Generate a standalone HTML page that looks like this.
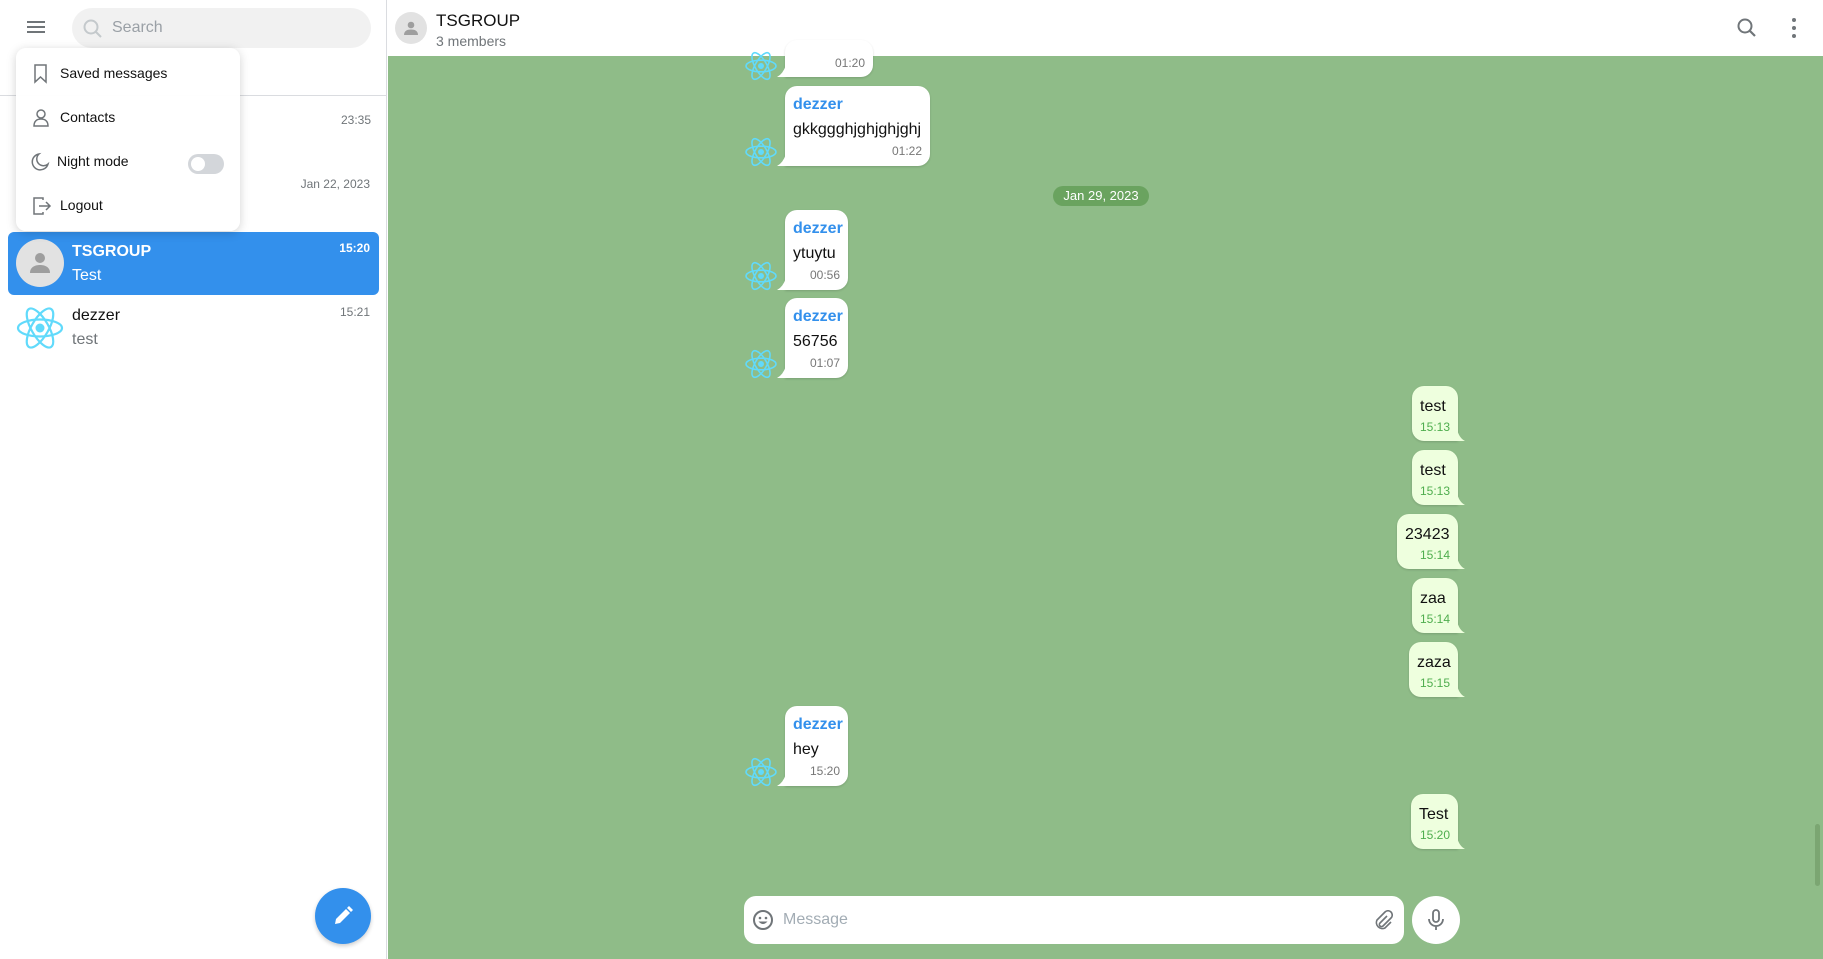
<!DOCTYPE html>
<html><head><meta charset="utf-8"><style>
*{box-sizing:border-box;margin:0;padding:0}
body{width:1823px;height:959px;overflow:hidden;font-family:"Liberation Sans",Arial,sans-serif;background:#fff;position:relative}
.abs{position:absolute}
#side{left:0;top:0;width:387px;height:959px;background:#fff;border-right:1px solid #dadce0}
#chat{left:388px;top:56px;width:1435px;height:903px;background:#8fbc88}
#hdr{left:388px;top:0;width:1435px;height:56px;background:#fff}
.bl{background:#fff;border-radius:12px 12px 12px 0;box-shadow:0 1px 2px rgba(0,0,0,.15)}
.br{background:#eeffde;border-radius:12px 12px 0 12px;box-shadow:0 1px 2px rgba(0,0,0,.15)}
.bl::before{content:"";position:absolute;left:-8px;bottom:0;width:9px;height:12px;background:#fff;clip-path:path("M9 0V12H0Q6 9 9 0z")}
.br::after{content:"";position:absolute;right:-7px;bottom:0;width:8px;height:12px;background:#eeffde;clip-path:path("M0 0V12H8Q2 9 0 0z")}
.nm{color:#3390ec;font-size:16px;font-weight:bold;position:absolute;left:8px;top:10px}
.tx{font-size:16px;color:#111;position:absolute}
.tm{font-size:12px;color:#777;position:absolute;right:8px}
.gt{color:#4fae4e}
.mi{position:absolute;left:0;width:224px;height:44px;font-size:14px;color:#111}
.mi svg{position:absolute;left:16px;top:10px}
.mi span{position:absolute;left:44px;top:11px}
</style></head><body>
<div id="side" class="abs">
  <svg class="abs" style="left:26px;top:20px" width="20" height="14"><path d="M1 2h18M1 7h18M1 12h18" stroke="#707579" stroke-width="2"/></svg>
  <div class="abs" style="left:72px;top:8px;width:299px;height:40px;border-radius:20px;background:#f1f1f1"></div>
  <svg class="abs" style="left:82px;top:18px" width="22" height="22"><circle cx="9" cy="9" r="6.5" stroke="#c4c9cc" stroke-width="2" fill="none"/><path d="M14 14l5 5" stroke="#c4c9cc" stroke-width="2"/></svg>
  <div class="abs" style="left:112px;top:19px;font-size:16px;color:#9aa0a6">Search</div>
  <div class="abs" style="left:0;top:95px;width:387px;height:1px;background:#dadce0"></div>
  <div class="abs" style="left:341px;top:113px;font-size:12px;color:#707579;width:29px;text-align:right">23:35</div>
  <div class="abs" style="left:290px;top:177px;font-size:12px;color:#707579;width:80px;text-align:right">Jan 22, 2023</div>
  <div class="abs" style="left:8px;top:232px;width:371px;height:63px;background:#3390ec;border-radius:6px"></div>
  <div class="abs" style="left:16px;top:239px;width:48px;height:48px;border-radius:50%;background:#e2e2e2"></div>
  <svg class="abs" style="left:28px;top:251px" width="24" height="24"><circle cx="12" cy="7" r="5" fill="#9e9e9e"/><path d="M2 22c0-6 5-8 10-8s10 2 10 8z" fill="#9e9e9e"/></svg>
  <div class="abs" style="left:72px;top:243px;font-size:16px;font-weight:bold;color:#fff">TSGROUP</div>
  <div class="abs" style="left:72px;top:267px;font-size:16px;color:#fff">Test</div>
  <div class="abs" style="left:330px;top:241px;font-size:12px;font-weight:bold;color:#fff;width:40px;text-align:right">15:20</div>
  <svg class="abs" style="left:16px;top:304px" width="48" height="48" viewBox="-24 -24 48 48"><g fill="none" stroke="#61dafb" stroke-width="2.2"><ellipse rx="22" ry="8.5"/><ellipse rx="22" ry="8.5" transform="rotate(60)"/><ellipse rx="22" ry="8.5" transform="rotate(120)"/></g><circle r="4.5" fill="#61dafb"/></svg>
  <div class="abs" style="left:72px;top:307px;font-size:16px;color:#111">dezzer</div>
  <div class="abs" style="left:72px;top:331px;font-size:16px;color:#707579">test</div>
  <div class="abs" style="left:330px;top:305px;font-size:12px;color:#707579;width:40px;text-align:right">15:21</div>
  <div class="abs" style="left:16px;top:48px;width:224px;height:183px;background:rgba(255,255,255,.96);border-radius:10px;box-shadow:0 2px 10px rgba(0,0,0,.18)">
    <div class="mi" style="top:6px"><svg width="18" height="20"><path d="M3 1h11v17l-5.5-5-5.5 5z" fill="none" stroke="#707579" stroke-width="1.5"/></svg><span>Saved messages</span></div>
    <div class="mi" style="top:50px"><svg width="20" height="20"><circle cx="9" cy="6" r="4" fill="none" stroke="#707579" stroke-width="1.5"/><path d="M2 18c0-5 3-7 7-7s7 2 7 7z" fill="none" stroke="#707579" stroke-width="1.5"/></svg><span>Contacts</span></div>
    <div class="mi" style="top:94px"><svg width="20" height="20" style="left:14px"><path d="M9 2a8 8 0 1 0 9 10 6 6 0 0 1-9-10z" fill="none" stroke="#707579" stroke-width="1.5"/></svg><span style="left:41px">Night mode</span>
      <div style="position:absolute;left:172px;top:12px;width:36px;height:20px;border-radius:10px;background:#d3d6da"><div style="position:absolute;left:3px;top:3px;width:14px;height:14px;border-radius:50%;background:#fff"></div></div></div>
    <div class="mi" style="top:138px"><svg width="20" height="20"><path d="M11 4V2H2v16h9v-2M7 10h11M14 6l4 4-4 4" fill="none" stroke="#707579" stroke-width="1.5"/></svg><span>Logout</span></div>
  </div>
  <div class="abs" style="left:315px;top:888px;width:56px;height:56px;border-radius:50%;background:#3390ec;box-shadow:0 2px 4px rgba(0,0,0,.2)"></div>
  <svg class="abs" style="left:332px;top:905px" width="22" height="22"><path d="M3 19l1-5L14 4l4 4L8 18z M15 3l2-2 4 4-2 2z" fill="#fff"/></svg>
</div>
<div id="hdr" class="abs">
  <div class="abs" style="left:7px;top:12px;width:32px;height:32px;border-radius:50%;background:#e2e2e2"></div>
  <svg class="abs" style="left:15px;top:20px" width="16" height="16"><circle cx="8" cy="5" r="3.3" fill="#9e9e9e"/><path d="M1 15c0-4 3-5.5 7-5.5s7 1.5 7 5.5z" fill="#9e9e9e"/></svg>
  <div class="abs" style="left:48px;top:11px;font-size:17px;color:#111">TSGROUP</div>
  <div class="abs" style="left:48px;top:33px;font-size:14px;color:#707579">3 members</div>
  <svg class="abs" style="left:1348px;top:17px" width="22" height="22"><circle cx="9" cy="9" r="6.5" stroke="#707579" stroke-width="2" fill="none"/><path d="M14 14l5 5" stroke="#707579" stroke-width="2.2"/></svg>
  <svg class="abs" style="left:1403px;top:17px" width="6" height="22"><circle cx="3" cy="3" r="2" fill="#707579"/><circle cx="3" cy="11" r="2" fill="#707579"/><circle cx="3" cy="19" r="2" fill="#707579"/></svg>
</div>
<div id="chat" class="abs"></div>
<svg width="0" height="0" style="position:absolute"><defs><g id="ra"><g fill="none" stroke="#61dafb" stroke-width="1.6"><ellipse rx="15" ry="5.8"/><ellipse rx="15" ry="5.8" transform="rotate(60)"/><ellipse rx="15" ry="5.8" transform="rotate(120)"/></g><circle r="3" fill="#61dafb"/></g></defs></svg>
<div class="abs bl" style="left:785px;top:40px;width:88px;height:37px"><div class="tm" style="top:16px">01:20</div></div>
<svg class="abs" style="left:744px;top:49px" width="34" height="34" viewBox="-17 -17 34 34"><use href="#ra"/></svg>
<div class="abs bl" style="left:785px;top:86px;width:145px;height:80px"><div class="nm">dezzer</div><div class="tx" style="left:8px;top:35px">gkkggghjghjghjghj</div><div class="tm" style="top:58px">01:22</div></div>
<svg class="abs" style="left:744px;top:135px" width="34" height="34" viewBox="-17 -17 34 34"><use href="#ra"/></svg>
<div class="abs" style="left:1053px;top:186px;width:96px;height:20px;border-radius:10px;background:#6aa35f;color:#fff;font-size:13px;text-align:center;line-height:20px">Jan 29, 2023</div>
<div class="abs bl" style="left:785px;top:210px;width:63px;height:80px"><div class="nm">dezzer</div><div class="tx" style="left:8px;top:35px">ytuytu</div><div class="tm" style="top:58px">00:56</div></div>
<svg class="abs" style="left:744px;top:259px" width="34" height="34" viewBox="-17 -17 34 34"><use href="#ra"/></svg>
<div class="abs bl" style="left:785px;top:298px;width:63px;height:80px"><div class="nm">dezzer</div><div class="tx" style="left:8px;top:35px">56756</div><div class="tm" style="top:58px">01:07</div></div>
<svg class="abs" style="left:744px;top:347px" width="34" height="34" viewBox="-17 -17 34 34"><use href="#ra"/></svg>
<div class="abs bl" style="left:785px;top:706px;width:63px;height:80px"><div class="nm">dezzer</div><div class="tx" style="left:8px;top:35px">hey</div><div class="tm" style="top:58px">15:20</div></div>
<svg class="abs" style="left:744px;top:755px" width="34" height="34" viewBox="-17 -17 34 34"><use href="#ra"/></svg>
<div class="abs br" style="left:1412px;top:386px;width:46px;height:55px"><div class="tx" style="left:8px;top:12px">test</div><div class="tm gt" style="top:34px">15:13</div></div>
<div class="abs br" style="left:1412px;top:450px;width:46px;height:55px"><div class="tx" style="left:8px;top:12px">test</div><div class="tm gt" style="top:34px">15:13</div></div>
<div class="abs br" style="left:1397px;top:514px;width:61px;height:55px"><div class="tx" style="left:8px;top:12px">23423</div><div class="tm gt" style="top:34px">15:14</div></div>
<div class="abs br" style="left:1412px;top:578px;width:46px;height:55px"><div class="tx" style="left:8px;top:12px">zaa</div><div class="tm gt" style="top:34px">15:14</div></div>
<div class="abs br" style="left:1409px;top:642px;width:49px;height:55px"><div class="tx" style="left:8px;top:12px">zaza</div><div class="tm gt" style="top:34px">15:15</div></div>
<div class="abs br" style="left:1411px;top:794px;width:47px;height:55px"><div class="tx" style="left:8px;top:12px">Test</div><div class="tm gt" style="top:34px">15:20</div></div>
<div class="abs" style="left:744px;top:896px;width:660px;height:48px;background:#fff;border-radius:12px"></div>
<svg class="abs" style="left:752px;top:909px" width="22" height="22"><circle cx="11" cy="11" r="9" fill="none" stroke="#707579" stroke-width="2"/><circle cx="8" cy="9" r="1.3" fill="#707579"/><circle cx="14" cy="9" r="1.3" fill="#707579"/><path d="M6.5 12.5q4.5 5 9 0z" fill="#707579"/></svg>
<div class="abs" style="left:783px;top:911px;font-size:16px;color:#a2acb4">Message</div>
<svg class="abs" style="left:1373px;top:910px" width="20" height="20"><path d="M14 6l-7 7a2 2 0 0 0 3 3l8-8a4 4 0 0 0-6-6l-8 8a6 6 0 0 0 8 8l6-6" fill="none" stroke="#707579" stroke-width="1.6"/></svg>
<div class="abs" style="left:1412px;top:896px;width:48px;height:48px;border-radius:50%;background:#fff"></div>
<svg class="abs" style="left:1425px;top:908px" width="22" height="24"><rect x="8" y="2" width="6" height="12" rx="3" fill="none" stroke="#707579" stroke-width="1.8"/><path d="M4 11a7 7 0 0 0 14 0M11 18v4" fill="none" stroke="#707579" stroke-width="1.8"/></svg>
<div class="abs" style="left:1815px;top:824px;width:5px;height:62px;border-radius:3px;background:#7ba672"></div>
</body></html>
